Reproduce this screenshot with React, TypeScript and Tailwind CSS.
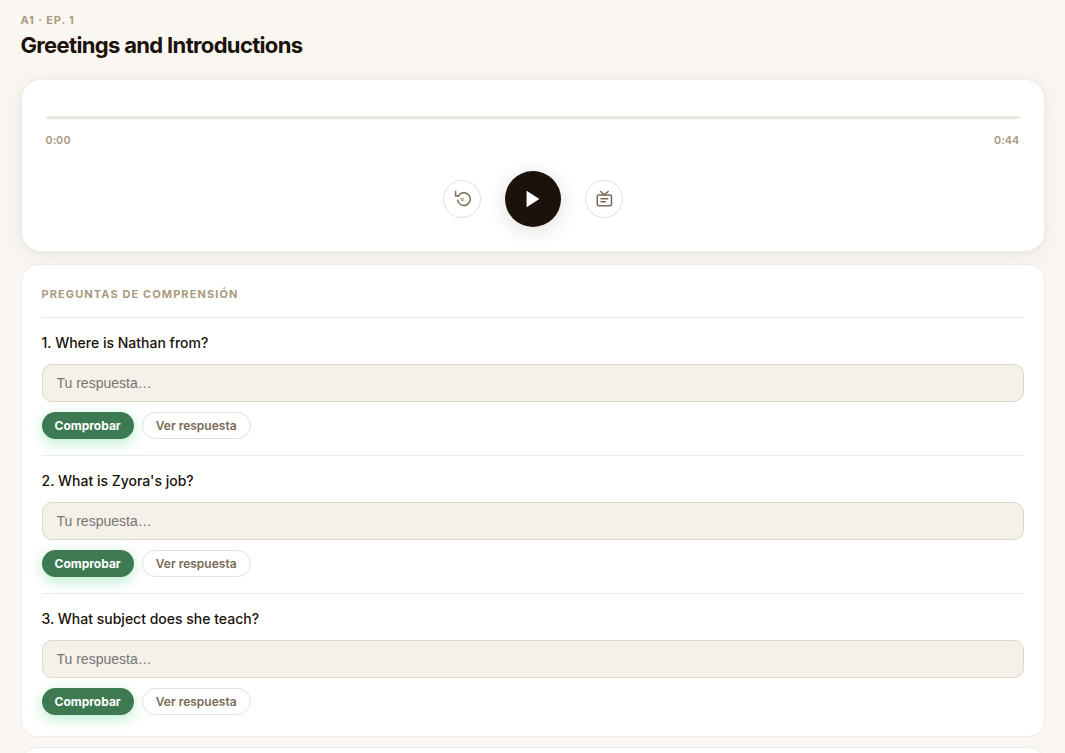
import { useState } from "react";

const questions = [
  { id: 1, text: "Where is Nathan from?", answer: "Nathan is from Canada." },
  { id: 2, text: "What is Zyora's job?", answer: "She is a teacher." },
  { id: 3, text: "What subject does she teach?", answer: "She teaches science." },
];

function ReplayIcon() {
  return (
    <svg width="18" height="18" viewBox="0 0 24 24" fill="none" stroke="currentColor" strokeWidth="2" strokeLinecap="round" strokeLinejoin="round" aria-hidden="true">
      <path d="M3.5 2v6h4" />
      <path d="M7.2 7.8a8.5 8.5 0 1 1-1 6" />
      <text x="12" y="14" fontSize="5" fontWeight="600" textAnchor="middle" fill="currentColor" stroke="none">10</text>
    </svg>
  );
}

function TranscriptIcon() {
  return (
    <svg width="18" height="18" viewBox="0 0 24 24" fill="none" stroke="currentColor" strokeWidth="2" strokeLinecap="round" strokeLinejoin="round" aria-hidden="true">
      <rect x="3" y="6.5" width="19" height="14.5" rx="2" />
      <path d="M7.5 2l5 4.5 5-4.5" />
      <path d="M8 11.7h9M8 15.7h6" />
    </svg>
  );
}

function Player() {
  const [playing, setPlaying] = useState(false);

  return (
    <section className="rounded-[20px] border border-[#ececec] bg-white px-6 pt-6 pb-6 shadow-[0_4px_24px_rgba(26,18,11,0.06),0_1px_4px_rgba(26,18,11,0.04)]">
      <input
        type="range"
        min={0}
        max={44}
        defaultValue={0}
        aria-label="Progreso"
        className="my-3 block h-[3px] w-full cursor-pointer appearance-none rounded-sm bg-[#ede8df] [&::-webkit-slider-thumb]:size-0 [&::-webkit-slider-thumb]:appearance-none"
      />
      <div className="flex justify-between text-[11px] leading-[18px] font-semibold tracking-wide text-[#ab9a80] tabular-nums">
        <span>0:00</span>
        <span>0:44</span>
      </div>

      {/* Controls */}
      <div className="mt-[22px] flex items-center justify-center gap-6">
        <button aria-label="Retroceder 10 segundos" className="flex size-[38px] items-center justify-center rounded-full border border-[#e2e0dd] text-[#7a6a58]">
          <ReplayIcon />
        </button>
        <button
          onClick={() => setPlaying(!playing)}
          aria-label={playing ? "Pausar" : "Reproducir"}
          className="flex size-14 items-center justify-center rounded-full bg-[#1a120b] text-white shadow-[0_4px_20px_rgba(26,18,11,0.14)]"
        >
          <svg width="22" height="22" viewBox="0 0 24 24" fill="currentColor" aria-hidden="true">
            {playing ? <path d="M6 4h4v16H6zM14 4h4v16h-4z" /> : <path d="M5 3l14 9-14 9z" />}
          </svg>
        </button>
        <button aria-label="Ver transcripción" className="flex size-[38px] items-center justify-center rounded-full border border-[#e2e0dd] text-[#7a6a58]">
          <TranscriptIcon />
        </button>
      </div>
    </section>
  );
}

function Question({ id, text, answer }: { id: number; text: string; answer: string }) {
  const [value, setValue] = useState("");
  const [shown, setShown] = useState(false);
  const [result, setResult] = useState("");

  const check = () => {
    const ok = value.trim().toLowerCase() === answer.toLowerCase();
    setResult(ok ? "¡Correcto!" : "Inténtalo de nuevo");
  };

  return (
    <div className="border-t border-[#ebebeb] pt-[14px] pb-4 last:pb-0">
      <label htmlFor={`q-${id}`} className="mb-[10px] block text-[14px] leading-[22px] font-medium">
        {id}. {text}
      </label>
      <input
        id={`q-${id}`}
        type="text"
        value={value}
        onChange={(e) => setValue(e.target.value)}
        placeholder="Tu respuesta…"
        className="block h-[38px] w-full rounded-[10px] border border-[#dcd7cb] bg-[#f5f0e8] px-[14px] font-['Liberation_Sans',Arial,sans-serif] text-[14px] outline-none placeholder:text-[#757575]"
      />
      <div className="mt-[10px] flex items-center gap-2 text-[12px] leading-[15px] font-semibold">
        <button onClick={check} className="h-[27px] rounded-full bg-[#3d7a52] px-[13px] font-bold text-white shadow-[0_4px_14px_rgba(34,197,94,0.3)]">
          Comprobar
        </button>
        <button onClick={() => setShown(!shown)} className="h-[27px] rounded-full border border-[#e2e0dd] bg-white px-[13px] text-[#7a6a58]">
          Ver respuesta
        </button>
        {result && <span className="text-[#3d7a52]">{result}</span>}
      </div>
      {shown && <p className="mt-2 text-sm text-[#7a6a58]">{answer}</p>}
    </div>
  );
}

export default function App() {
  return (
    <div className="h-screen overflow-hidden bg-[#faf7f2] font-['Inter',sans-serif] text-[#1a120b]">
      <main className="mx-auto max-w-5xl pt-3">
        {/* Header */}
        <header className="mb-5">
          <p className="text-[11px] leading-4 font-bold tracking-[0.08em] text-[#ab9a80] uppercase">A1 · Ep. 1</p>
          <h1 className="mt-[3px] text-[22px] leading-7 font-bold tracking-[-0.03em]">Greetings and Introductions</h1>
        </header>

        <Player />

        <section className="mt-3 rounded-2xl border border-[#ebebeb] bg-white px-5 pt-5 pb-[21px]">
          <h2 className="mb-[14px] text-[11px] leading-[18px] font-bold tracking-widest text-[#ab9a80] uppercase">
            Preguntas de comprensión
          </h2>
          {questions.map((q) => (
            <Question key={q.id} {...q} />
          ))}
        </section>

        <section className="mt-[10px] h-40 rounded-2xl border border-[#ebebeb] bg-white"></section>
      </main>
    </div>
  );
}
